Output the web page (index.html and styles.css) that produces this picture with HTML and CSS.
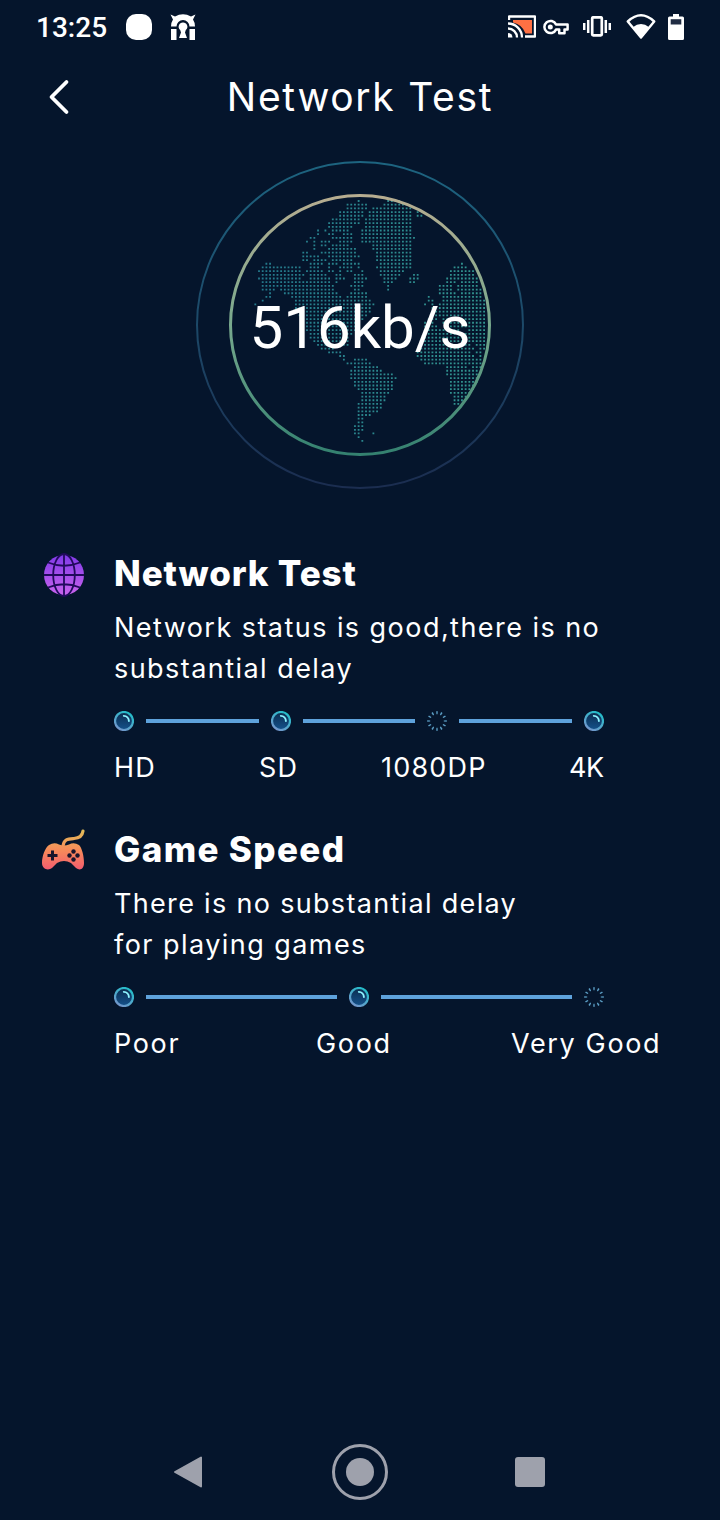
FILE: index.html
```
<!DOCTYPE html>
<html lang="en">
<head>
  <meta charset="UTF-8">
  <meta name="viewport" content="width=device-width, initial-scale=1.0">
  <title>Network Test</title>
  <link rel="stylesheet" href="styles.css">
</head>
<body>
  <!-- Shared symbols for the progress dots -->
  <svg class="defs" width="0" height="0">
    <defs>
      <linearGradient id="ring" x1="0.8" y1="0" x2="0.2" y2="1">
        <stop offset="0" stop-color="#20bfc9"></stop>
        <stop offset="1" stop-color="#7595cc"></stop>
      </linearGradient>
      <linearGradient id="core" x1="0" y1="0" x2="0" y2="1">
        <stop offset="0" stop-color="#0b2c4e"></stop>
        <stop offset="1" stop-color="#15528c"></stop>
      </linearGradient>
      <symbol id="dot-done" viewBox="0 0 20 20">
        <circle cx="10" cy="10" r="9" fill="url(#core)" stroke="url(#ring)" stroke-width="2.2"></circle>
        <path d="M9.8 4.9a5.3 5.3 0 0 1 5.1 5.2" fill="none" stroke="#8df3ff" stroke-width="1.9" stroke-linecap="round"></path>
      </symbol>
      <symbol id="dot-wait" viewBox="0 0 20 20">
        <circle cx="10" cy="10" r="8.3" fill="none" stroke="#5c9fc6" stroke-width="3" pathLength="48" stroke-dasharray="1.3 2.7" stroke-dashoffset="0.65"></circle>
      </symbol>
    </defs>
  </svg>

  <header class="status-bar">
    <div class="status-left">
      <span class="clock">13:25</span>
      <span class="app-blob"></span>
      <svg class="vpn-icon" width="26" height="26" viewBox="0 0 26 26">
        <path d="M.5.5L5 2.500Q13-2 21 2.500L25.500.5 23 5.500Q25 8.500 25 12.500h-5.500a6.500 6.500 0 0 0-13 0H1Q1 8.500 3 5.500z" fill="#fff"></path>
        <path d="M1 15h5.500v11H1zM19.500 15H25v11h-5.500z" fill="#fff"></path>
        <path d="M13 8.500a4.300 4.300 0 0 0-2.800 7.600l.8 2.400L9 24h8l-2-5.500.8-2.400A4.300 4.300 0 0 0 13 8.500z" fill="#fff"></path>
      </svg>
    </div>
    <div class="status-right">
      <svg class="cast-icon" width="28" height="23" viewBox="0 0 28 23">
        <path d="M1 5V1.5h26v20H17" fill="none" stroke="#fff" stroke-width="2.4" stroke-linejoin="round"></path>
        <path d="M5 5h19v13.5h-6.5A17 17 0 0 0 5 7.5z" fill="#ff7043"></path>
        <path d="M0 8.5A14 14 0 0 1 14 22.5M0 13.5a9 9 0 0 1 9 9" fill="none" stroke="#fff" stroke-width="2.3"></path>
        <path d="M0 18a4.5 4.5 0 0 1 4.5 4.5H0z" fill="#fff"></path>
      </svg>
      <svg class="key-icon" width="26" height="16" viewBox="0 0 26 16">
        <path d="M13 5.4A6.1 6.1 0 1 0 13 10.6h3.2v3.7h5.3v-3.7H24.6V5.4z" fill="none" stroke="#fff" stroke-width="2.5" stroke-linejoin="round"></path>
        <circle cx="7.3" cy="8" r="2.5" fill="#fff"></circle>
      </svg>
      <svg class="vibrate-icon" width="28" height="21" viewBox="0 0 28 21">
        <rect x="9.2" y="1.3" width="9.6" height="18" rx="1" fill="none" stroke="#fff" stroke-width="2.7"></rect>
        <path d="M1.2 7v7M5.2 4v13M22.8 4v13M26.8 7v7" stroke="#fff" stroke-width="2.5"></path>
      </svg>
      <svg class="wifi-icon" width="30" height="25" viewBox="0 0 30 25">
        <path d="M1.8 7.5Q15-4.8 28.2 7.5L15 23.5z" fill="none" stroke="#fff" stroke-width="2.4" stroke-linejoin="round"></path>
        <path d="M6.8 13.3Q15 6.5 23.2 13.3L15 23.5z" fill="#fff"></path>
      </svg>
      <svg class="battery-icon" width="16" height="26" viewBox="0 0 16 26">
        <path d="M5 0h6v2.5h3.5Q16 2.5 16 4v20.5q0 1.5-1.5 1.5h-13Q0 26 0 24.5V4q0-1.5 1.5-1.5H5z" fill="#fff"></path>
        <path d="M2.7 5.2h10.600v5.300H2.700z" fill="#202c43"></path>
      </svg>
    </div>
  </header>

  <div class="title-bar">
    <svg class="back" width="22" height="36" viewBox="0 0 22 36">
      <path d="M18.5 3L3.5 18l15 15" fill="none" stroke="#fff" stroke-width="3.8" stroke-linecap="round" stroke-linejoin="round"></path>
    </svg>
    <h1>Network Test</h1>
  </div>

  <div class="gauge">
    <svg class="gauge-art" width="328" height="328" viewBox="196 161 328 328">
      <defs>
        <linearGradient id="outer" x1="0" y1="0" x2="0" y2="1">
          <stop offset="0" stop-color="#1d6480"></stop>
          <stop offset="1" stop-color="#1b2d50"></stop>
        </linearGradient>
        <linearGradient id="inner" x1="0" y1="0" x2="0" y2="1">
          <stop offset="0" stop-color="#b7ad91"></stop>
          <stop offset="0.5" stop-color="#78a98d"></stop>
          <stop offset="1" stop-color="#348170"></stop>
        </linearGradient>
        <linearGradient id="sea" gradientUnits="userSpaceOnUse" x1="255" y1="0" x2="490" y2="0">
          <stop offset="0" stop-color="#23788b"></stop>
          <stop offset="1" stop-color="#329690"></stop>
        </linearGradient>
      </defs>
      <circle cx="360" cy="325" r="163" fill="none" stroke="url(#outer)" stroke-width="2"></circle>
      <path id="map" fill="url(#sea)"></path>
      <circle cx="360" cy="325" r="129.5" fill="none" stroke="url(#inner)" stroke-width="3"></circle>
    </svg>
    <div class="speed">516kb/s</div>
  </div>

  <main>
    <section class="card">
      <svg class="card-icon" width="44" height="44" viewBox="0 0 44 44">
        <defs>
          <linearGradient id="purple" x1="0" y1="0" x2="0" y2="1">
            <stop offset="0" stop-color="#813ae8"></stop>
            <stop offset="1" stop-color="#c963ed"></stop>
          </linearGradient>
        </defs>
        <circle cx="22" cy="22" r="20" fill="url(#purple)"></circle>
        <g fill="none" stroke="#210a5c" stroke-width="1.8">
          <path d="M22 2v40M2 22h40M6 9.5Q22 16 38 9.5M6 34.5Q22 28 38 34.5"></path>
          <ellipse cx="22" cy="22" rx="10.8" ry="21"></ellipse>
        </g>
      </svg>
      <div class="card-body">
        <h2>Network Test</h2>
        <p>Network status is good,there is no<br>substantial delay</p>
        <div class="steps">
          <svg class="dot"><use href="#dot-done"></use></svg>
          <span class="bar"></span>
          <svg class="dot"><use href="#dot-done"></use></svg>
          <span class="bar"></span>
          <svg class="dot"><use href="#dot-wait"></use></svg>
          <span class="bar"></span>
          <svg class="dot"><use href="#dot-done"></use></svg>
        </div>
        <div class="labels quality">
          <span>HD</span>
          <span>SD</span>
          <span>1080DP</span>
          <span class="last">4K</span>
        </div>
      </div>
    </section>

    <section class="card">
      <svg class="card-icon pad-icon" width="44" height="44" viewBox="0 0 44 44">
        <defs>
          <linearGradient id="pad" gradientUnits="userSpaceOnUse" x1="0" y1="2" x2="0" y2="42">
            <stop offset="0" stop-color="#e2bd58"></stop>
            <stop offset="0.5" stop-color="#f78b59"></stop>
            <stop offset="1" stop-color="#f35b70"></stop>
          </linearGradient>
        </defs>
        <path d="M21 18C22 11 26 11 32 10.5Q40 10 41 3" fill="none" stroke="url(#pad)" stroke-width="3.2" stroke-linecap="round"></path>
        <path d="M7 17q5-3 10-.5 5 2 10 0 5-2.500 10 .5c3 3 5 11 5 18 0 6-4 8-8 5l-5-5q-7-4-14 0l-5 5c-4 3-10 1-10-5 0-7 3-15 7-18z" fill="url(#pad)"></path>
        <path d="M10.500 22.500v10M5.500 27.500h10" stroke="#19152c" stroke-width="3"></path>
        <g fill="#19152c"><circle cx="31.500" cy="23.500" r="2.200"></circle><circle cx="31.500" cy="31.500" r="2.200"></circle><circle cx="27.500" cy="27.500" r="2.200"></circle><circle cx="35.500" cy="27.500" r="2.200"></circle></g>
      </svg>
      <div class="card-body">
        <h2 class="game">Game Speed</h2>
        <p><span class="tight">There is no substantial delay</span><br>for playing games</p>
        <div class="steps">
          <svg class="dot"><use href="#dot-done"></use></svg>
          <span class="bar"></span>
          <svg class="dot"><use href="#dot-done"></use></svg>
          <span class="bar"></span>
          <svg class="dot"><use href="#dot-wait"></use></svg>
        </div>
        <div class="labels level">
          <span>Poor</span>
          <span>Good</span>
          <span>Very Good</span>
        </div>
      </div>
    </section>
  </main>

  <nav class="nav-bar">
    <svg width="60" height="60" viewBox="0 0 60 60">
      <path d="M15 30L41 15.5v29z" fill="#9ea1ac" stroke="#9ea1ac" stroke-width="2" stroke-linejoin="round"></path>
    </svg>
    <svg width="60" height="60" viewBox="0 0 60 60">
      <circle cx="30" cy="30" r="26.5" fill="none" stroke="#9ea1ac" stroke-width="3"></circle>
      <circle cx="30" cy="30" r="14" fill="#9ea1ac"></circle>
    </svg>
    <svg width="60" height="60" viewBox="0 0 60 60">
      <rect x="15" y="15" width="30" height="30" rx="3" fill="#9ea1ac"></rect>
    </svg>
  </nav>

  <script src="script.js"></script>
</body>
</html>
```
FILE: styles.css
```
/* General Styling */
* {
  box-sizing: border-box;
}

body {
  margin: 0;
  width: 720px;
  height: 1520px;
  display: flex;
  flex-direction: column;
  background: #05152c;
  color: #fff;
  font-family: Inter, "Open Sans", sans-serif;
  overflow: hidden;
}

svg {
  display: block;
  flex: none;
}

.defs {
  position: absolute;
}

/* Status bar */
.status-bar {
  display: flex;
  justify-content: space-between;
  height: 54px;
  padding: 0 36px;
  align-items: center;
}

.status-left,
.status-right {
  display: flex;
  align-items: center;
}

.status-right {
  padding-bottom: 1px;
}

.clock {
  width: 90px;
  font: 500 28px/54px Roboto, sans-serif;
  padding-top: 1px;
}

.app-blob {
  width: 26px;
  height: 26px;
  border-radius: 10px;
  background: #fff;
}

.vpn-icon {
  margin-left: 18px;
}

.key-icon {
  margin-left: 7px;
}

.vibrate-icon {
  margin-left: 14px;
}

.wifi-icon {
  margin-left: 15px;
}

.battery-icon {
  margin-left: 12px;
}

/* Title */
.title-bar {
  display: grid;
  grid-template-columns: 100px 1fr 100px;
  align-items: center;
  height: 86px;
}

.back {
  margin-left: 48px;
}

h1 {
  margin: 0 0 2px;
  text-align: center;
  font-size: 39px;
  font-weight: 400;
  letter-spacing: 1.7px;
  white-space: nowrap;
}

/* Speed gauge */
.gauge {
  display: grid;
  justify-content: center;
  align-items: center;
  margin-top: 21px;
  height: 328px;
}

.gauge-art,
.speed {
  grid-area: 1 / 1;
}

.speed {
  padding-top: 5px;
  text-align: center;
  font: 400 60px/70px Roboto, sans-serif;
}

/* Result sections */
main {
  flex: 1;
  padding: 64px 0 0 42px;
}

.card {
  display: flex;
  gap: 28px;
  height: 276px;
}

.card-body {
  width: 546px;
}

.pad-icon {
  margin-top: -1px;
}

h2 {
  margin: 0;
  font-size: 35px;
  font-weight: 800;
  line-height: 40px;
  letter-spacing: 0.85px;
  white-space: nowrap;
}

.game {
  letter-spacing: 1.35px;
}

p {
  margin: 14px 0 0;
  font-size: 27px;
  line-height: 41px;
  letter-spacing: 1.45px;
  white-space: nowrap;
}

.tight {
  letter-spacing: 1.32px;
}

.steps {
  display: flex;
  align-items: center;
  gap: 12px;
  width: 490px;
  margin-top: 22px;
}

.dot {
  width: 20px;
  height: 20px;
}

.bar {
  flex: 1;
  height: 4px;
  background: #5ea2dc;
}

.labels {
  display: grid;
  margin-top: 17px;
  font-size: 27px;
  line-height: 40px;
  white-space: nowrap;
}

.quality {
  grid-template-columns: 145px 122px 188px auto;
  letter-spacing: 1.2px;
}

.last {
  letter-spacing: -0.5px;
}

.level {
  grid-template-columns: 202px 195px auto;
  letter-spacing: 1.65px;
}

/* System navigation */
.nav-bar {
  display: flex;
  justify-content: space-between;
  height: 78px;
  padding: 0 160px;
}
```
FILE: script.js
```
// Filled column ranges for every row of the dotted world map
const rows = [
  "27 35-38", "24-29 34-40", "24-29 31-41", "22-28 30-41 43", "22-28 30-41 43-44",
  "20-27 29-41", "19-27 29-41", "19-25 29-41", "16 18 20-24 28-41", "16 19-20 23-25 28-41",
  "14-15 20-25 28-42", "13 15 17-19 22-25 28-41", "15 17-18 20-24 31-41", "15 19-26 31-41", "12-13 17-26 32-41",
  "12-16 19-27 32-41", "12-13 15-18 20-25 32-41", "2-3 14-17 19-21 23-27 33-41 55", "1-11 14-16 19 22-25 27 32-41 53-56", "0-11 13-17 19-20 22 24-25 28 33-39 52-58",
  "1-12 14-18 21-22 26-28 33-38 42-43 52-58", "0-11 14-19 21-23 26-29 34-37 41-43 51-59", "1-19 21 26-28 34-36 41-42 51-53 55-59", "1-20 25-28 35 49-52 54-59", "1-4 6-20 26-27 35 49-52 54-60",
  "3 7-21 25-29 49-53 55-60", "2-3 9-22 24-29 46 50-60", "1 10-30 46-47 50-61", "-1 10-31 45 47 49-61", "10-30 47 49-61",
  "11-30 48-61", "11-29 48-61", "12-28 46-48 50-61", "13-27 45-47 50-61", "13-26 45-48 52-61",
  "13-26 45-54 57-61", "14-25 45-61", "14-24 45-61", "15-24 44-61", "16-19 23-24 44-57 59-61",
  "17-20 44-58 60-61", "19-22 43-57 59-60", "22-23 43-58 60", "23 26-29 44-60", "24-30 45-60",
  "26-32 51-56 58-60", "25-33 51-59", "25-36 51-59", "25-37 52-59", "26-36 52-59",
  "26-36 52-58", "27-36 52-58", "28-35 52-57", "28-34 53-56", "28-34 53-55",
  "27-33 53-54", "27-33", "27-32", "27-30", "27-28",
  "27-28", "26-28", "26-28", "26-27 31", "27", "28"
];

const step = 3.69;
let d = "";
rows.forEach((row, r) => {
  row.split(" ").forEach((run) => {
    const [, from, to] = run.match(/^(-?\d+)(?:-(\d+))?$/);
    for (let c = +from; c <= +(to || from); c++) {
      const x = (258.1 + c * step).toFixed(2);
      const y = (200.1 + r * step).toFixed(2);
      d += `M${x} ${y}h1.8v1.8h-1.8z`;
    }
  });
});
document.getElementById("map").setAttribute("d", d);
```
